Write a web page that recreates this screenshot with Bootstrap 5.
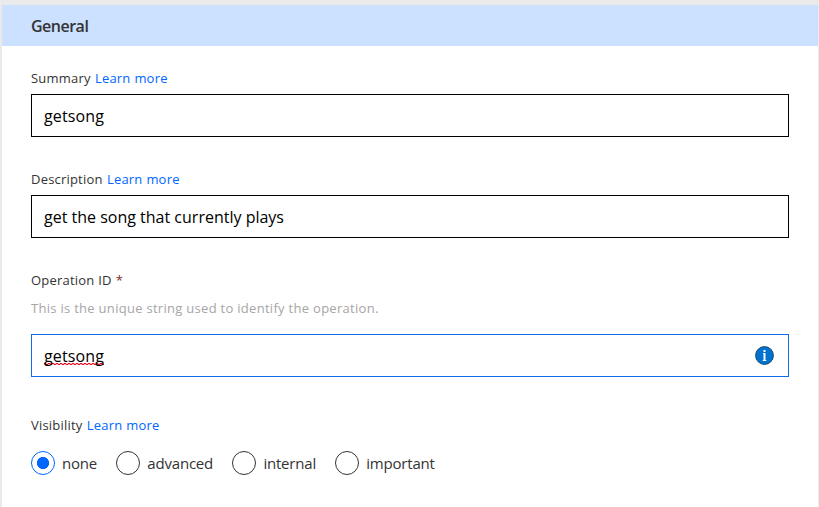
<!DOCTYPE html>
<html lang="en">
<head>
<meta charset="utf-8">
<meta name="viewport" content="width=device-width, initial-scale=1">
<title>General</title>
<link href="https://cdn.jsdelivr.net/npm/bootstrap@5.3.0/dist/css/bootstrap.min.css" rel="stylesheet">
<style>
body{background:#eaeaea;font-family:"Segoe UI","Open Sans","Noto Sans",sans-serif;color:#333;overflow:hidden}
.panel{margin:5px 1px 0 2px;height:502px;background:#fff}
.panel-head{height:41px;padding-left:29px;background:#cce0ff}
.panel-head h2{font-size:16px;font-weight:600;letter-spacing:-.5px;line-height:24px;color:#333}
.panel-body{padding:22px 29px 0}
.field{margin-bottom:32px}
.field.last-text{margin-bottom:38px}
.cap{display:block;font-size:13px;line-height:20px;letter-spacing:.2px;word-spacing:.3px;margin-bottom:6px;white-space:nowrap}
.cap a{margin-left:.4px;color:#0066ff}
.star{color:#7a2b2b}
.hint{font-size:13px;line-height:20px;letter-spacing:.29px;margin:8px 0 16px;color:#a6a6a6}
.form-control.box{height:43px;padding:1px 12px 0;border:1px solid #000;color:#000;font-size:16px}
.form-control.box.single{letter-spacing:.15px}
.form-control.box.active{border-color:#0f6be8;cursor:text}
.typo{line-height:24px;background:
  repeating-linear-gradient(90deg,#e81123 0 2px,#f9b4ba 2px 4px) 0 19px/100% 1px no-repeat,
  repeating-linear-gradient(90deg,#f9b4ba 0 2px,#e81123 2px 4px) 0 20px/100% 1px no-repeat}
.info{margin:0 2px 1px 0}
.choices{margin-top:16px;gap:19.3px}
.form-check-input.dot{width:24px;height:24px;margin:0 7px 0 0;border:1px solid #333;background-color:#fff;flex:none}
.form-check-input.dot:checked{background:#fff radial-gradient(circle,#0066ff 5.7px,transparent 6.4px);border-color:#0066ff}
.choice{font-size:15px;line-height:24px;letter-spacing:-.2px}
</style>
</head>
<body>
<main class="panel">
  <header class="panel-head d-flex align-items-center"><h2 class="m-0">General</h2></header>
  <form class="panel-body">
    <div class="field">
      <label class="cap" for="summary"><span>Summary</span> <a href="#" class="text-decoration-none">Learn more</a></label>
      <input id="summary" class="form-control box single rounded-0 shadow-none" value="getsong">
    </div>
    <div class="field">
      <label class="cap" for="desc"><span>Description</span> <a href="#" class="text-decoration-none">Learn more</a></label>
      <input id="desc" class="form-control box rounded-0 shadow-none" value="get the song that currently plays">
    </div>
    <div class="field last-text">
      <div class="cap"><span>Operation ID</span> <span class="star">*</span></div>
      <p class="hint">This is the unique string used to identify the operation.</p>
      <div class="form-control box single active rounded-0 shadow-none d-flex align-items-center justify-content-between">
        <span class="typo">getsong</span>
        <svg width="19" height="19" viewBox="0 0 19 19" class="info" aria-label="Information"><circle cx="9.5" cy="9.5" r="8.9" fill="#0072d0" stroke="#17486f"/><path d="M8.5 4h2v2h-2zM8 7h2.5v7h.8v1H7.7v-1h.8V8H8z" fill="#fff"/></svg>
      </div>
    </div>
    <div>
      <div class="cap"><span>Visibility</span> <a href="#" class="text-decoration-none">Learn more</a></div>
      <div class="choices d-flex">
        <label class="choice d-flex"><input class="form-check-input dot shadow-none" type="radio" name="vis" checked><span>none</span></label>
        <label class="choice d-flex"><input class="form-check-input dot shadow-none" type="radio" name="vis"><span>advanced</span></label>
        <label class="choice d-flex"><input class="form-check-input dot shadow-none" type="radio" name="vis"><span>internal</span></label>
        <label class="choice d-flex"><input class="form-check-input dot shadow-none" type="radio" name="vis"><span>important</span></label>
      </div>
    </div>
  </form>
</main>
<script src="https://cdn.jsdelivr.net/npm/bootstrap@5.3.0/dist/js/bootstrap.bundle.min.js"></script>
</body>
</html>
